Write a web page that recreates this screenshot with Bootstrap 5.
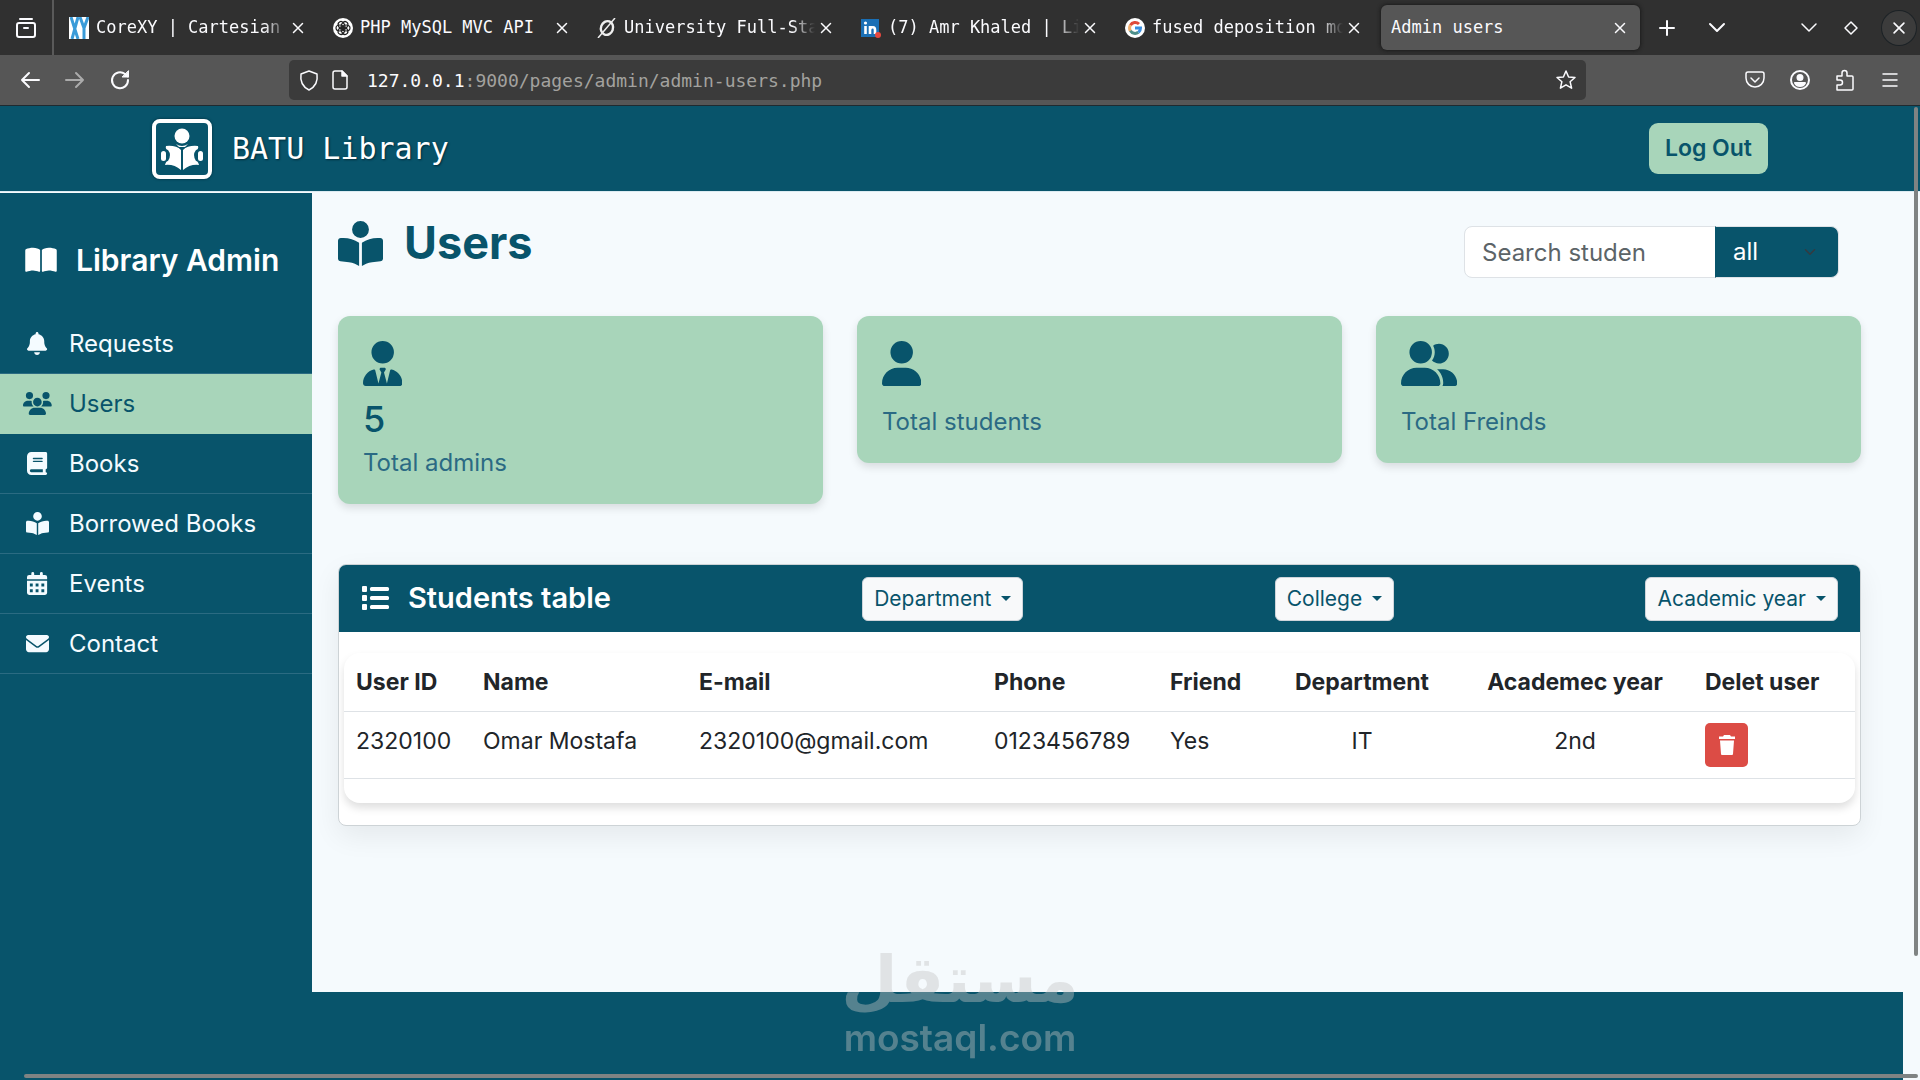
<!DOCTYPE html>
<html lang="en">
<head>
<meta charset="utf-8">
<meta name="viewport" content="width=device-width, initial-scale=1">
<title>Admin users</title>
<link href="https://cdn.jsdelivr.net/npm/bootstrap@5.3.0/dist/css/bootstrap.min.css" rel="stylesheet">
<style>
:root{--teal:#08546b;--mint:#a8d5ba;--paper:#f5fafd}
body{font-family:Inter,"Open Sans",sans-serif;font-size:24px;background:var(--paper);color:#212529;min-height:100vh;overflow:hidden}
svg{display:block;flex:none}
.ic{fill:currentColor;height:23px}
.line{fill:none;stroke:currentColor;stroke-width:2;stroke-linecap:round;stroke-linejoin:round}
.thin{stroke-width:1.5}
.plain{background:none;border:0;padding:0;color:inherit;display:flex;align-items:center;justify-content:center;flex:none}
/* browser frame */
.mono{font-family:"DejaVu Sans Mono","Liberation Mono",monospace}
.tabstrip{height:55px;background:#303030;color:#fbfbfe;font-size:17px}
.tab-view{width:54px;height:55px;border-right:2px solid #5a5a5a;margin-right:7px}
.tab-item{flex:0 1 264px;min-width:0;height:45px;padding:0 16px 0 8px;gap:7px}
.tab-item .ttl{flex:1 1 0;min-width:0;margin-right:-7px;overflow:hidden;white-space:nowrap;color:inherit;text-decoration:none}
.tab-item .fade-end{-webkit-mask-image:linear-gradient(90deg,#000 88%,transparent);mask-image:linear-gradient(90deg,#000 88%,transparent)}
.tab-item.current{flex-basis:259px;background:#565656;border-radius:6px;box-shadow:0 0 4px #111;padding:0 9px 0 10px}
.closer{width:22px;height:22px}
.sys{gap:20px}
.win-close{width:34px;height:34px;border-radius:50%;background:#3c3c3c;box-shadow:0 0 0 1px #1c2226}
.toolbar{height:51px;background:#565656;border-bottom:1px solid #1f2a30;color:#fbfbfe;padding:0 18px}
.nav-ico{gap:21px;width:271px}
.address{height:40px;background:#3b3b3b;border-radius:5px;flex:0 1 1297px;font-size:18px;padding:0 8px 0 8px}
.address input{background:none;border:0;outline:0;color:#a3a29f;padding:0;flex:1 1 0;min-width:0}
.tool-ico{gap:21px}
/* site */
.site-bar{height:86px;background:var(--teal);color:#fff;border-bottom:1px solid #dcebf2;padding:0 152px}
.logo-box{width:60px;height:60px;border:4px solid #fff;border-radius:8px;box-shadow:0 0 3px #032c3a}
.brand-name{font-size:30px;line-height:60px;color:#fff;text-decoration:none;gap:20px;text-shadow:1px 1px 2px #032c3a}
.btn-mint,.btn-mint:hover{background:var(--mint);color:var(--teal);font-weight:600;font-size:23px;line-height:33px;padding:9px 16px;border-radius:9px;border:0}
.side{width:312px;background:var(--teal);color:#fff;border-top:2px solid var(--teal);margin-top:1px}
.side-title{font-size:30px;font-weight:600;padding:40px 0 0 25px;gap:19px;line-height:50px;margin-bottom:29px}
.side-link{height:60px;border-bottom:1px solid #2b6b82;color:#f4fbff;text-decoration:none;padding-left:24px;gap:18px}
.side-link .slot{width:27px;display:flex;justify-content:center}
.side-link.on{background:var(--mint);color:var(--teal);border-color:var(--mint)}
.content{padding:24px 59px 0 26px}
.page-title{font-size:45px;font-weight:700;color:var(--teal);line-height:54px;gap:21px;margin:0}
.finder{width:375px;margin:10px 22px 0 0}
.finder .form-control,.finder .form-select{height:52px;font-size:24px;line-height:36px;padding:6px 12px 6px 17px;border-color:#dee2e6;border-radius:8px}
.finder .form-control::placeholder{color:#5c6468}
.finder .form-select{flex:0 0 124px;background-color:var(--teal);color:#fff;border-color:#dee2e6 #dee2e6 #dee2e6 var(--teal);background-position:right 20px center;background-size:16px 12px}
.stats{gap:34px;margin-top:38px;align-items:flex-start}
.stat{flex:1 1 0;background:var(--mint);border-radius:12px;box-shadow:0 4px 8px rgba(0,0,0,.12);padding:25px 25px 24px;color:var(--teal)}
.stat svg{height:45px;fill:currentColor}
.stat .num{font-size:36px;font-weight:500;line-height:40px;margin:13px 0 7px}
.stat .cap{line-height:34px;color:#2b6a84}
.stat .cap.far{margin-top:19px}
.panel{margin-top:60px;background:#fff;border:1px solid #cdd3d6;border-radius:8px;box-shadow:0 10px 28px rgba(0,0,0,.07);overflow:hidden}
.panel-head{background:var(--teal);color:#fff;height:67px;padding:0 22px}
.panel-head h2{font-size:29px;font-weight:600;gap:18px;margin:0}
.btn-pick,.btn-pick:hover{background:#f8f9fa;color:var(--teal);border:1px solid #ced4da;border-radius:6px;font-size:21px;line-height:30px;padding:6px 11px}
.btn-pick:after{margin-left:10px;font-size:19px}
.sheet{margin:21px 5px 22px;border-radius:16px;box-shadow:0 5px 9px rgba(0,0,0,.13);padding-bottom:24px;overflow:hidden}
.sheet table{table-layout:fixed;margin:0;color:#212529;font-size:23px}
.sheet th,.sheet td{padding:12px;line-height:34px;white-space:nowrap;background:none}
.sheet td{height:67px}
.btn-del{background:#dc4c45;color:#fff;border:0;border-radius:5px;width:43px;height:44px;margin-top:-1px}
.foot{height:88px;background:var(--teal);margin-right:17px}
.vbar{position:absolute;right:2px;top:107px;bottom:124px;width:4px;background:#7f8383;border-radius:2px}
.hbar{position:absolute;left:24px;right:2px;bottom:2px;height:4px;background:#7f8383;border-radius:2px}
.wmark{position:absolute;left:0;right:0;bottom:24px;text-align:center;color:#c4c4c4;opacity:.41;font-weight:600;pointer-events:none}
.wmark .ar{font-family:"DejaVu Sans",sans-serif;font-weight:700;font-size:65px;line-height:78px}
.wmark .la{font-size:37px;line-height:37px}
</style>
<script src="https://cdn.jsdelivr.net/npm/bootstrap@5.3.0/dist/js/bootstrap.bundle.min.js"></script>
</head>
<body class="d-flex flex-column position-relative">
<svg width="0" height="0" class="position-absolute" aria-hidden="true">
<symbol id="x" viewBox="0 0 22 22"><path class="line thin" d="M6.500 6.500l9 9M15.500 6.500l-9 9"/></symbol>
<symbol id="reader" viewBox="0 0 512 512"><path d="M160 96a96 96 0 1 1 192 0A96 96 0 1 1 160 96zm80 152l0 264-48.400-24.200c-20.900-10.400-43.500-17-66.800-19.300l-96-9.600C12.500 457.200 0 443.500 0 427L0 224c0-17.700 14.300-32 32-32l30.300 0c63.600 0 125.600 19.600 177.700 56zm32 264l0-264c52.100-36.400 114.100-56 177.700-56l30.300 0c17.700 0 32 14.300 32 32l0 203c0 16.400-12.500 30.200-28.800 31.800l-96 9.600c-23.200 2.300-45.900 8.900-66.800 19.300L272 512z"/></symbol>
</svg>

<header class="mono">
  <div class="tabstrip d-flex align-items-center">
    <button class="plain tab-view" aria-label="View tabs"><svg width="22" height="22" viewBox="0 0 22 22" class="line"><path d="M5 2h12"/><rect x="2" y="6" width="18" height="14" rx="2"/><path d="M9 11h4"/></svg></button>
    <div class="tab-item d-flex align-items-center">
      <svg width="20" height="22" viewBox="0 0 20 22"><rect width="20" height="22" fill="#fff"/><path fill="none" stroke="#3a9bd8" stroke-width="3" d="M2 0l7 22M9 0L3 22M11 0l4 11 4-11M15 10v12"/></svg>
      <a href="#" class="ttl fade-end">CoreXY | Cartesian N</a><button class="plain closer" aria-label="Close tab"><svg width="22" height="22"><use href="#x"/></svg></button>
    </div>
    <div class="tab-item d-flex align-items-center">
      <svg width="20" height="20" viewBox="0 0 20 20"><circle cx="10" cy="10" r="10" fill="#fff"/><g fill="none" stroke="#222" stroke-width="1.200"><ellipse cx="10" cy="7" rx="3" ry="4" transform="rotate(30 10 10)"/><ellipse cx="10" cy="7" rx="3" ry="4" transform="rotate(90 10 10)"/><ellipse cx="10" cy="7" rx="3" ry="4" transform="rotate(150 10 10)"/><ellipse cx="10" cy="7" rx="3" ry="4" transform="rotate(210 10 10)"/><ellipse cx="10" cy="7" rx="3" ry="4" transform="rotate(270 10 10)"/><ellipse cx="10" cy="7" rx="3" ry="4" transform="rotate(330 10 10)"/></g></svg>
      <a href="#" class="ttl">PHP MySQL MVC API</a><button class="plain closer" aria-label="Close tab"><svg width="22" height="22"><use href="#x"/></svg></button>
    </div>
    <div class="tab-item d-flex align-items-center">
      <svg width="20" height="20" viewBox="0 0 20 20" fill="none" stroke="#eee"><ellipse cx="10" cy="10" rx="6" ry="7" stroke-width="2.400" transform="rotate(20 10 10)"/><path stroke-width="1.500" d="M1 20L18 0"/></svg>
      <a href="#" class="ttl fade-end">University Full-Stac</a><button class="plain closer" aria-label="Close tab"><svg width="22" height="22"><use href="#x"/></svg></button>
    </div>
    <div class="tab-item d-flex align-items-center">
      <svg width="20" height="20" viewBox="0 0 20 20"><rect width="18" height="18" y="1" fill="#1a6fb5"/><circle cx="4.500" cy="5" r="1.600" fill="#fff"/><path fill="none" stroke="#fff" stroke-width="2.600" d="M4.500 8v8M9 16V8M9 11.500c1-3 5-3 5 .5v4"/><circle cx="17" cy="17" r="3" fill="#e5483f"/></svg>
      <a href="#" class="ttl fade-end">(7) Amr Khaled | Lin</a><button class="plain closer" aria-label="Close tab"><svg width="22" height="22"><use href="#x"/></svg></button>
    </div>
    <div class="tab-item d-flex align-items-center">
      <svg width="20" height="20" viewBox="0 0 20 20"><circle cx="10" cy="10" r="10" fill="#fff"/><g fill="none" stroke-width="3"><path stroke="#e04a3a" d="M5.400 7.200A5.500 5.500 0 0 1 14 6"/><path stroke="#f0b070" d="M5.400 7a6 6 0 0 0 0 6"/><path stroke="#4d8f8a" d="M5.400 12.800a5.500 5.500 0 0 0 8 1.500"/><path stroke="#3a8fe0" d="M10 10h5.500a5.500 5.500 0 0 1-2 4.300"/></g></svg>
      <a href="#" class="ttl fade-end">fused deposition mod</a><button class="plain closer" aria-label="Close tab"><svg width="22" height="22"><use href="#x"/></svg></button>
    </div>
    <div class="tab-item current d-flex align-items-center">
      <a href="#" class="ttl">Admin users</a><button class="plain closer" aria-label="Close tab"><svg width="22" height="22"><use href="#x"/></svg></button>
    </div>
    <div class="d-flex align-items-center ms-3 gap-4">
      <button class="plain" aria-label="New tab"><svg width="22" height="22" viewBox="0 0 22 22" class="line"><path d="M11 4v14M4 11h14"/></svg></button>
      <button class="plain ms-1" aria-label="List all tabs"><svg width="22" height="22" viewBox="0 0 22 22" class="line"><path d="M4 7l7 7 7-7"/></svg></button>
    </div>
    <div class="d-flex align-items-center ms-auto sys pe-1">
      <button class="plain" aria-label="Minimize"><svg width="22" height="22" viewBox="0 0 22 22" class="line thin"><path d="M4 7l7 7 7-7"/></svg></button>
      <button class="plain" aria-label="Maximize"><svg width="22" height="22" viewBox="0 0 22 22" class="line thin"><path d="M11 5l6 6-6 6-6-6z"/></svg></button>
      <button class="plain win-close" aria-label="Close window"><svg width="24" height="24"><use href="#x"/></svg></button>
    </div>
  </div>
  <div class="toolbar d-flex align-items-center">
    <div class="d-flex nav-ico">
      <button class="plain" aria-label="Back"><svg width="24" height="24" viewBox="0 0 24 24" class="line"><path d="M21 12H4M11 5l-7 7 7 7"/></svg></button>
      <button class="plain text-white-50" aria-label="Forward"><svg width="24" height="24" viewBox="0 0 24 24" class="line"><path d="M3 12h17M13 5l7 7-7 7"/></svg></button>
      <button class="plain" aria-label="Reload"><svg width="24" height="24" viewBox="0 0 24 24" class="line"><path d="M20 12a8 8 0 1 1-3-6l3 2.500"/><path fill="currentColor" stroke-width="1" d="M20.500 3v6h-6z"/></svg></button>
    </div>
    <div class="address d-flex align-items-center">
      <svg width="24" height="24" viewBox="0 0 24 24" class="line thin"><path d="M12 3l8 3c1 7-2 13-8 16C6 19 3 13 4 6z"/></svg>
      <svg width="22" height="22" viewBox="0 0 22 22" class="line thin ms-2 me-3"><path d="M13 2H6a2 2 0 0 0-2 2v14a2 2 0 0 0 2 2h10a2 2 0 0 0 2-2V7z"/><path fill="currentColor" d="M13 2v5h5z"/></svg>
      <label for="url">127.0.0.1</label><input id="url" type="text" value=":9000/pages/admin/admin-users.php">
      <button class="plain" aria-label="Bookmark"><svg width="24" height="24" viewBox="0 0 24 24" class="line thin"><path d="M12 3l2.600 6 6.400.5-4.900 4.200 1.500 6.500L12 16.800l-5.600 3.400 1.500-6.500L3 9.500 9.400 9z"/></svg></button>
    </div>
    <div class="d-flex ms-auto tool-ico">
      <button class="plain" aria-label="Pocket"><svg width="24" height="24" viewBox="0 0 24 24" class="line thin"><path d="M5 4h14a2 2 0 0 1 2 2v4a9 9 0 0 1-18 0V6a2 2 0 0 1 2-2z"/><path d="M8 10l4 4 4-4"/></svg></button>
      <button class="plain" aria-label="Account"><svg width="24" height="24" viewBox="0 0 24 24" class="line"><circle cx="12" cy="12" r="9"/><circle cx="12" cy="9.500" r="2.500" fill="currentColor"/><path fill="currentColor" d="M7 15h10c-2 4-8 4-10 0z"/></svg></button>
      <button class="plain" aria-label="Extensions"><svg width="24" height="24" viewBox="0 0 24 24" class="line thin"><path d="M4 8h5V5a2.500 2.500 0 0 1 5 0v3h5a1 1 0 0 1 1 1v12a1 1 0 0 1-1 1H4v-5h3a2 2 0 0 0 0-5H4z"/></svg></button>
      <button class="plain" aria-label="Menu"><svg width="24" height="24" viewBox="0 0 24 24" class="line thin"><path d="M5 6h14M5 12h14M5 18h14"/></svg></button>
    </div>
  </div>
</header>

<nav class="site-bar d-flex align-items-center justify-content-between">
  <a href="#" class="brand-name mono d-flex align-items-center">
    <span class="logo-box d-flex align-items-center justify-content-center"><svg width="44" height="44" viewBox="0 0 44 44" fill="#fff"><circle cx="22" cy="9" r="7.500"/><path d="M16 17q6 4 12 0l-3 3h-6zM6 19q10-1 15 4v20q-7-6-16-5 1-4 3-4 4-6 0-11-3-1-2-4zM38 19q-10-1-15 4v20q7-6 16-5-1-4-3-4-4-6 0-11 3-1 2-4z"/><rect x="1" y="24" width="5" height="10" rx="2.500"/><rect x="38" y="24" width="5" height="10" rx="2.500"/></svg></span>
    <span>BATU Library</span></a>
  <button class="btn btn-mint">Log Out</button>
</nav>

<div class="d-flex flex-grow-1">
  <aside class="side flex-shrink-0">
    <div class="side-title d-flex align-items-center"><svg width="32" height="28" viewBox="0 0 576 512" fill="#fff"><path d="M249.600 471.500c10.800 3.800 22.400-4.100 22.400-15.500l0-377.400c0-4.200-1.600-8.400-5-11C247.400 52 202.400 32 144 32C93.500 32 46.300 45.300 18.100 56.100C6.800 60.500 0 71.700 0 83.800L0 454.100c0 11.900 12.800 20.200 24.100 16.500C55.600 460.100 105.500 448 144 448c33.900 0 79 14 105.600 23.500zm76.800 0C353 462 398.100 448 432 448c38.500 0 88.400 12.100 119.900 22.600c11.300 3.800 24.100-4.600 24.100-16.500l0-370.300c0-12.100-6.800-23.300-18.100-27.600C529.700 45.300 482.500 32 432 32c-58.400 0-103.400 20-123 35.600c-3.300 2.600-5 6.800-5 11L304 456c0 11.400 11.700 19.300 22.400 15.500z"/></svg>Library Admin</div>
    <a href="#" class="side-link d-flex align-items-center"><span class="slot"><svg class="ic" viewBox="0 0 448 512"><path d="M224 0c-17.700 0-32 14.300-32 32l0 19.200C119 66 64 130.600 64 208l0 18.800c0 47-17.300 92.400-48.500 127.600l-7.400 8.300c-8.400 9.400-10.400 22.900-5.300 34.400S19.400 416 32 416l384 0c12.600 0 24-7.400 29.200-18.900s3.100-25-5.300-34.400l-7.400-8.300C401.300 319.200 384 273.900 384 226.800l0-18.800c0-77.400-55-142-128-156.800L256 32c0-17.700-14.300-32-32-32zm45.300 493.300c12-12 18.700-28.300 18.700-45.300l-64 0-64 0c0 17 6.700 33.300 18.700 45.300s28.300 18.700 45.300 18.700s33.300-6.700 45.300-18.700z"/></svg></span>Requests</a>
    <a href="#" class="side-link on d-flex align-items-center"><span class="slot"><svg class="ic" viewBox="0 0 640 512"><path d="M144 0a80 80 0 1 1 0 160A80 80 0 1 1 144 0zM512 0a80 80 0 1 1 0 160A80 80 0 1 1 512 0zM0 298.700C0 239.800 47.800 192 106.700 192l42.700 0c15.900 0 31 3.500 44.600 9.700c-1.300 7.200-1.900 14.700-1.900 22.300c0 38.200 16.800 72.500 43.300 96c-.2 0-.4 0-.7 0L21.300 320C9.600 320 0 310.400 0 298.700zM405.300 320c-.2 0-.4 0-.7 0c26.600-23.500 43.300-57.800 43.300-96c0-7.600-.7-15-1.900-22.300c13.600-6.300 28.700-9.700 44.600-9.700l42.700 0C592.200 192 640 239.800 640 298.700c0 11.800-9.600 21.300-21.300 21.300l-213.300 0zM224 224a96 96 0 1 1 192 0 96 96 0 1 1 -192 0zM128 485.300C128 411.700 187.700 352 261.300 352l117.300 0C452.300 352 512 411.700 512 485.300c0 14.700-11.900 26.700-26.700 26.700l-330.700 0c-14.700 0-26.700-11.900-26.700-26.700z"/></svg></span>Users</a>
    <a href="#" class="side-link d-flex align-items-center"><span class="slot"><svg class="ic" viewBox="0 0 448 512"><path d="M96 0C43 0 0 43 0 96L0 416c0 53 43 96 96 96l288 0 32 0c17.700 0 32-14.300 32-32s-14.300-32-32-32l0-64c17.700 0 32-14.300 32-32l0-320c0-17.700-14.300-32-32-32L384 0 96 0zm0 384l256 0 0 64L96 448c-17.700 0-32-14.300-32-32s14.300-32 32-32zm32-240c0-8.800 7.200-16 16-16l192 0c8.800 0 16 7.200 16 16s-7.200 16-16 16l-192 0c-8.800 0-16-7.200-16-16zm16 48l192 0c8.800 0 16 7.200 16 16s-7.200 16-16 16l-192 0c-8.800 0-16-7.200-16-16s7.200-16 16-16z"/></svg></span>Books</a>
    <a href="#" class="side-link d-flex align-items-center"><span class="slot"><svg class="ic" viewBox="0 0 512 512"><use href="#reader"/></svg></span>Borrowed Books</a>
    <a href="#" class="side-link d-flex align-items-center"><span class="slot"><svg class="ic" viewBox="0 0 448 512"><path fill-rule="evenodd" d="M96 32a32 32 0 0 1 64 0v32h128V32a32 32 0 0 1 64 0v32h48a48 48 0 0 1 48 48v48H0v-48a48 48 0 0 1 48-48h48zM0 192h448v272a48 48 0 0 1-48 48H48a48 48 0 0 1-48-48zM64 256v64h64v-64zM192 256v64h64v-64zM320 256v64h64v-64zM64 384v64h64v-64zM192 384v64h64v-64zM320 384v64h64v-64z"/></svg></span>Events</a>
    <a href="#" class="side-link d-flex align-items-center"><span class="slot"><svg class="ic" viewBox="0 0 512 512"><path d="M48 64C21.500 64 0 85.500 0 112c0 15.100 7.100 29.300 19.200 38.400L236.800 313.600c11.400 8.500 27 8.500 38.400 0L492.800 150.400c12.100-9.100 19.200-23.300 19.200-38.400c0-26.500-21.500-48-48-48L48 64zM0 176L0 384c0 35.300 28.700 64 64 64l384 0c35.300 0 64-28.700 64-64l0-208L294.400 339.200c-22.800 17.100-54 17.100-76.800 0L0 176z"/></svg></span>Contact</a>
  </aside>

  <main class="content flex-grow-1">
    <div class="d-flex justify-content-between align-items-start">
      <h1 class="page-title d-flex align-items-center"><svg width="45" height="45" fill="currentColor"><use href="#reader"/></svg>Users</h1>
      <form class="finder input-group flex-nowrap">
        <input class="form-control" type="text" placeholder="Search studen" aria-label="Search students">
        <select class="form-select" aria-label="Filter"><option>all</option></select>
      </form>
    </div>
    <section class="stats d-flex">
      <div class="stat"><svg viewBox="0 0 448 512"><path d="M96 128a128 128 0 1 0 256 0A128 128 0 1 0 96 128zm94.500 200.200l18.600 31L175.800 483.100l-36-146.900c-2-8.100-9.800-13.400-17.900-11.300C51.900 342.400 0 405.800 0 481.300c0 17 13.800 30.700 30.700 30.700l131.700 0 123.200 0 131.700 0c17 0 30.700-13.800 30.700-30.700c0-75.500-51.900-138.900-121.900-156.400c-8.100-2-15.900 3.300-17.900 11.300l-36 146.900L238.900 359.200l18.600-31c6.400-10.700-1.300-24.200-13.700-24.200L224 304l-19.700 0c-12.400 0-20.100 13.600-13.700 24.200z"/></svg>
        <div class="num">5</div><div class="cap">Total admins</div></div>
      <div class="stat"><svg viewBox="0 0 448 512"><path d="M224 256A128 128 0 1 0 224 0a128 128 0 1 0 0 256zm-45.700 48C79.800 304 0 383.800 0 482.300C0 498.700 13.300 512 29.700 512l388.600 0c16.400 0 29.700-13.300 29.700-29.700C448 383.800 368.200 304 269.700 304l-91.400 0z"/></svg>
        <div class="cap far">Total students</div></div>
      <div class="stat"><svg viewBox="0 0 640 512"><path d="M96 128a128 128 0 1 1 256 0A128 128 0 1 1 96 128zM0 482.300C0 383.800 79.800 304 178.300 304l91.400 0C368.200 304 448 383.800 448 482.300c0 16.400-13.300 29.700-29.700 29.700L29.700 512C13.300 512 0 498.700 0 482.300zM609.300 512l-137.800 0c5.400-9.400 8.600-20.300 8.600-32l0-8c0-60.700-27.100-115.200-69.800-151.800c2.400-.1 4.700-.2 7.100-.2l61.400 0C567.800 320 640 392.200 640 481.300c0 17-13.800 30.700-30.700 30.700zM432 256c-31 0-59-12.600-79.300-32.900C372.400 196.500 384 163.600 384 128c0-26.800-6.600-52.100-18.300-74.300C384.300 40.100 407.200 32 432 32c61.900 0 112 50.100 112 112s-50.100 112-112 112z"/></svg>
        <div class="cap far">Total Freinds</div></div>
    </section>
    <section class="panel">
      <div class="panel-head d-flex align-items-center justify-content-between">
        <h2 class="d-flex align-items-center"><svg width="29" height="26" viewBox="0 0 29 26" fill="#fff"><rect x="1" y="1" width="5" height="6" rx="1"/><rect x="1" y="10" width="5" height="6" rx="1"/><rect x="1" y="19" width="5" height="6" rx="1"/><rect x="9" y="2" width="19" height="4" rx="1.500"/><rect x="9" y="11" width="19" height="4" rx="1.500"/><rect x="9" y="20" width="19" height="4" rx="1.500"/></svg>Students table</h2>
        <button class="btn btn-pick dropdown-toggle">Department</button>
        <button class="btn btn-pick dropdown-toggle">College</button>
        <button class="btn btn-pick dropdown-toggle">Academic year</button>
      </div>
      <div class="sheet">
        <table class="table">
          <colgroup><col style="width:127px"><col style="width:216px"><col style="width:295px"><col style="width:176px"><col style="width:109px"><col style="width:190px"><col style="width:236px"><col style="width:162px"></colgroup>
          <thead><tr><th>User ID</th><th>Name</th><th>E-mail</th><th>Phone</th><th>Friend</th><th class="text-center">Department</th><th class="text-center">Academec year</th><th>Delet user</th></tr></thead>
          <tbody><tr><td>2320100</td><td>Omar Mostafa</td><td>2320100@gmail.com</td><td>0123456789</td><td>Yes</td><td class="text-center">IT</td><td class="text-center">2nd</td>
          <td class="pb-0"><button class="btn-del d-flex align-items-center justify-content-center" aria-label="Delete user"><svg width="18" height="20" viewBox="0 0 18 20" fill="#fff"><path d="M6 0h6l1 1.500h4V4H1V1.500h4zM2 5.500h14L15 19q0 1-1 1H4q-1 0-1-1z"/></svg></button></td></tr></tbody>
        </table>
      </div>
    </section>
  </main>
</div>
<footer class="foot"></footer>

<div class="wmark"><div class="ar" lang="ar" dir="rtl">مستقل</div><div class="la">mostaql.com</div></div>
<div class="vbar"></div>
<div class="hbar"></div>
</body>
</html>
